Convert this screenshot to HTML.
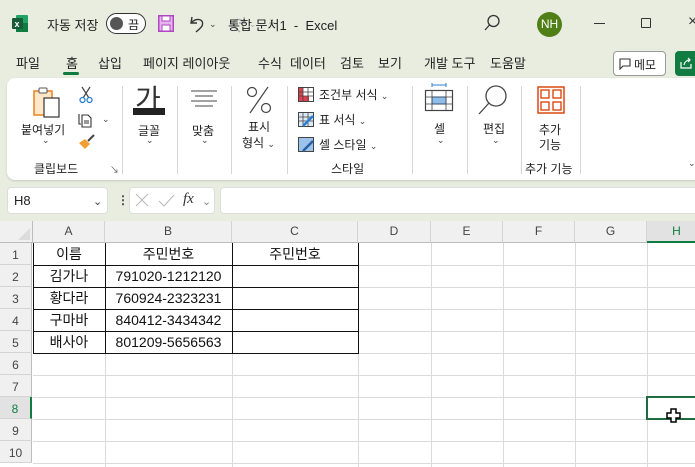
<!DOCTYPE html>
<html><head><meta charset="utf-8">
<style>
*{margin:0;padding:0;box-sizing:border-box}
body{width:695px;height:467px;overflow:hidden;background:#e9ede0;font-family:"Liberation Sans","Noto Sans CJK KR",sans-serif;color:#222;position:relative}
.a{position:absolute;white-space:nowrap}
.t13{font-size:13px}
.t12{font-size:12px}
.sep{position:absolute;top:86px;width:1px;height:88px;background:#d6d6d6}
.chev{font-size:9px;color:#444}
.hdr{position:absolute;top:221px;height:22px;background:#f0f0f0;border-bottom:1px solid #bdbdbd;font-size:12px;color:#444;text-align:center;line-height:20px;border-right:1px solid #d4d4d4}
.rh{position:absolute;left:0;width:32px;background:#f0f0f0;border-right:1px solid #bdbdbd;border-bottom:1px solid #d4d4d4;font-size:12px;color:#444;text-align:center;line-height:22px;height:22px;padding-top:1px}
.cell{position:absolute;font-size:14px;text-align:center;line-height:21px;color:#111;padding-top:1px}
</style></head><body>
<!-- title bar -->
<svg class="a" style="left:12px;top:15px" width="16" height="17"><rect x="4" y="0" width="12" height="17" rx="1" fill="#21a366"/><rect x="4" y="8" width="12" height="9" fill="#107c41"/><rect x="0" y="3" width="11" height="11" rx="1" fill="#185c37"/><text x="2.5" y="12" font-size="9" fill="#fff" font-family="Liberation Sans" font-weight="bold">x</text></svg>
<div class="a t13" style="left:47px;top:15px">자동 저장</div>
<div class="a" style="left:106px;top:13px;width:40px;height:21px;border:1.5px solid #333;border-radius:11px;background:#fff"></div>
<div class="a" style="left:110px;top:17px;width:13px;height:13px;border-radius:50%;background:#555"></div>
<div class="a t12" style="left:128px;top:16px">끔</div>
<svg class="a" style="left:158px;top:15px" width="16" height="17"><rect x="0.75" y="0.75" width="14.5" height="15.5" fill="#e4b5ec" stroke="#b146c2" stroke-width="1.5"/><rect x="4" y="1" width="8" height="5" fill="#fff" stroke="#b146c2"/><rect x="4" y="10" width="8" height="6" fill="#fff" stroke="#b146c2"/></svg>
<svg class="a" style="left:188px;top:14px" width="20" height="20"><path d="M4 3 L3 9 L9 9 M3 9 C8 3 17 5 14 12 C12 15 9 17 8 18" fill="none" stroke="#333" stroke-width="1.4"/></svg>
<div class="a chev" style="left:209px;top:19px">⌄</div>
<svg class="a" style="left:228px;top:14px" width="20" height="20"><path d="M16 3 L17 9 L11 9 M17 9 C12 3 3 5 6 12 C8 15 11 17 12 18" fill="none" stroke="#aaa" stroke-width="1.4"/></svg>
<div class="a chev" style="left:249px;top:19px;color:#aaa">⌄</div>
<div class="a" style="left:269px;top:17px;font-size:10px;color:#333">⩡</div>
<div class="a t13" style="left:228px;top:15px">통합 문서1 &nbsp;- &nbsp;Excel</div>
<svg class="a" style="left:483px;top:14px" width="18" height="18"><circle cx="10.5" cy="7" r="5.5" fill="none" stroke="#333" stroke-width="1.3"/><path d="M6.5 11 L2 16" stroke="#333" stroke-width="1.3"/></svg>
<div class="a" style="left:537px;top:12px;width:25px;height:25px;border-radius:50%;background:#4f7f16;color:#fff;font-size:12px;text-align:center;line-height:25px">NH</div>
<div class="a" style="left:594px;top:23px;width:11px;height:1px;background:#333"></div>
<div class="a" style="left:641px;top:18px;width:10px;height:10px;border:1.2px solid #333;border-radius:1px"></div>
<div class="a" style="left:688px;top:13px;font-size:16px;color:#333">×</div>
<!-- tabs -->
<div class="a t13" style="left:16px;top:53px">파일</div>
<div class="a t13" style="left:66px;top:53px">홈</div>
<div class="a" style="left:63px;top:72px;width:16px;height:3px;background:#107c41;border-radius:2px"></div>
<div class="a t13" style="left:98px;top:53px">삽입</div>
<div class="a t13" style="left:143px;top:53px">페이지 레이아웃</div>
<div class="a t13" style="left:258px;top:53px">수식</div>
<div class="a t13" style="left:290px;top:53px">데이터</div>
<div class="a t13" style="left:340px;top:53px">검토</div>
<div class="a t13" style="left:378px;top:53px">보기</div>
<div class="a t13" style="left:424px;top:53px">개발 도구</div>
<div class="a t13" style="left:490px;top:53px">도움말</div>
<div class="a" style="left:613px;top:51px;width:53px;height:25px;border:1px solid #999;border-radius:4px;background:#fff"></div>
<svg class="a" style="left:619px;top:58px" width="12" height="12"><path d="M1 1 H11 V8 H4 L1 11 Z" fill="none" stroke="#333" stroke-width="1.1"/></svg>
<div class="a t12" style="left:634px;top:56px">메모</div>
<div class="a" style="left:675px;top:51px;width:25px;height:25px;border-radius:4px;background:#107c41"></div>
<svg class="a" style="left:679px;top:56px" width="14" height="14"><path d="M2 6 V12 H12 V8 M5 9 C6 5 8 4 11 4 M9 2 L11 4 L9 6" fill="none" stroke="#fff" stroke-width="1.2"/></svg>
<!-- ribbon -->
<div class="a" style="left:7px;top:78px;width:700px;height:102px;background:#fff;border-radius:8px;box-shadow:0 1px 2px rgba(0,0,0,.15)"></div>
<svg class="a" style="left:33px;top:86px" width="30" height="32"><rect x="1" y="5" width="18" height="24" fill="#fde7c8" stroke="#e8821e" stroke-width="1.5"/><rect x="6" y="2" width="8" height="5" rx="1" fill="#fff" stroke="#555"/><rect x="11" y="12" width="15" height="19" fill="#fff" stroke="#333" stroke-width="1.2"/></svg>
<div class="a t12" style="left:21px;top:121px">붙여넣기</div>
<div class="a chev" style="left:42px;top:135px">⌄</div>
<svg class="a" style="left:79px;top:86px" width="14" height="18"><path d="M3 1 L10 12 M11 1 L4 12" stroke="#444" stroke-width="1.2"/><circle cx="3.5" cy="14" r="2.5" fill="none" stroke="#2a7fd4" stroke-width="1.3"/><circle cx="10.5" cy="14" r="2.5" fill="none" stroke="#2a7fd4" stroke-width="1.3"/></svg>
<svg class="a" style="left:78px;top:112px" width="16" height="16"><path d="M1 2 V12 H3 M4 3 H10 L13 6 V15 H4 Z" fill="none" stroke="#333" stroke-width="1.1"/><path d="M6 9 H11 M6 11 H11" stroke="#333"/></svg>
<div class="a chev" style="left:102px;top:114px">⌄</div>
<svg class="a" style="left:78px;top:134px" width="18" height="16"><path d="M1 9 L7 15 L12 10 L7 5 Z" fill="#f0a030"/><path d="M10 7 L16 1" stroke="#444" stroke-width="2"/></svg>
<div class="a t12" style="left:34px;top:160px">클립보드</div>
<div class="a" style="left:110px;top:163px;font-size:9px;color:#555">↘</div>
<div class="sep" style="left:122px"></div>
<div class="a" style="left:135px;top:78px;font-size:28px;color:#333">가</div>
<div class="a" style="left:133px;top:108px;width:32px;height:7px;background:#222"></div>
<div class="a t12" style="left:138px;top:122px">글꼴</div>
<div class="a chev" style="left:146px;top:135px">⌄</div>
<div class="sep" style="left:177px"></div>
<svg class="a" style="left:190px;top:90px" width="28" height="18"><path d="M1 1 H27 M5 6 H23 M1 11 H27 M5 16 H23" stroke="#444" stroke-width="1"/></svg>
<div class="a t12" style="left:192px;top:122px">맞춤</div>
<div class="a chev" style="left:201px;top:135px">⌄</div>
<div class="sep" style="left:231px"></div>
<svg class="a" style="left:246px;top:86px" width="26" height="28"><circle cx="6" cy="6" r="4.5" fill="none" stroke="#444" stroke-width="1.2"/><circle cx="20" cy="22" r="4.5" fill="none" stroke="#444" stroke-width="1.2"/><path d="M22 1 L4 27" stroke="#444" stroke-width="1.2"/></svg>
<div class="a t12" style="left:248px;top:118px">표시</div>
<div class="a t12" style="left:242px;top:134px">형식 <span class="chev">⌄</span></div>
<div class="sep" style="left:287px"></div>
<svg class="a" style="left:298px;top:87px" width="16" height="15"><rect x=".5" y=".5" width="15" height="14" fill="#fff" stroke="#444"/><rect x="1" y="1" width="4" height="13" fill="#e04050"/><rect x="5" y="9" width="6" height="5" fill="#e04050"/><path d="M5 1 V14 M10 1 V14 M1 5 H15 M1 9 H15" stroke="#444" stroke-width=".8"/></svg>
<div class="a t12" style="left:319px;top:86px">조건부 서식 <span class="chev">⌄</span></div>
<svg class="a" style="left:298px;top:112px" width="16" height="15"><rect x=".5" y=".5" width="15" height="14" fill="#dbe8f5" stroke="#444"/><path d="M5 1 V14 M10 1 V14 M1 5 H15 M1 9 H15" stroke="#444" stroke-width=".8"/><path d="M5 14 L15 4" stroke="#2a7fd4" stroke-width="2.5"/></svg>
<div class="a t12" style="left:319px;top:111px">표 서식 <span class="chev">⌄</span></div>
<svg class="a" style="left:298px;top:137px" width="16" height="15"><rect x=".5" y=".5" width="15" height="14" fill="#9cc3ea" stroke="#444"/><path d="M5 14 L15 4" stroke="#2a5fa4" stroke-width="2.5"/></svg>
<div class="a t12" style="left:319px;top:136px">셀 스타일 <span class="chev">⌄</span></div>
<div class="a t12" style="left:331px;top:160px">스타일</div>
<div class="sep" style="left:412px"></div>
<svg class="a" style="left:424px;top:82px" width="30" height="30"><path d="M8 3 H22 M8 1 V5 M22 1 V5" stroke="#2a7fd4"/><rect x="1.5" y="8.5" width="27" height="20" fill="#fff" stroke="#444" stroke-width="1.2"/><rect x="8" y="15" width="14" height="7" fill="#8fbce8" stroke="#1f6fc4"/><path d="M8 9 V28 M22 9 V28 M2 15 H28 M2 22 H28" stroke="#444" stroke-width=".8"/></svg>
<div class="a t12" style="left:434px;top:120px">셀</div>
<div class="a chev" style="left:437px;top:135px">⌄</div>
<div class="sep" style="left:467px"></div>
<svg class="a" style="left:478px;top:84px" width="32" height="32"><circle cx="18" cy="12" r="10" fill="none" stroke="#444" stroke-width="1.3"/><path d="M11 19 L1 30" stroke="#444" stroke-width="1.3"/></svg>
<div class="a t12" style="left:483px;top:120px">편집</div>
<div class="a chev" style="left:492px;top:135px">⌄</div>
<div class="sep" style="left:521px"></div>
<svg class="a" style="left:537px;top:86px" width="28" height="28"><rect x="1" y="1" width="26" height="26" fill="none" stroke="#d83b01" stroke-width="1.4"/><rect x="4" y="4" width="8" height="8" fill="none" stroke="#d83b01" stroke-width="1.3"/><rect x="16" y="4" width="8" height="8" fill="none" stroke="#d83b01" stroke-width="1.3"/><rect x="4" y="16" width="8" height="8" fill="none" stroke="#d83b01" stroke-width="1.3"/><rect x="16" y="16" width="8" height="8" fill="none" stroke="#d83b01" stroke-width="1.3"/></svg>
<div class="a t12" style="left:539px;top:121px">추가</div>
<div class="a t12" style="left:539px;top:136px">기능</div>
<div class="a t12" style="left:525px;top:160px">추가 기능</div>
<div class="sep" style="left:580px"></div>
<div class="a chev" style="left:688px;top:158px">⌄</div>
<!-- formula bar -->
<div class="a" style="left:7px;top:187px;width:101px;height:27px;background:#fff;border-radius:4px;border:1px solid #ddd"></div>
<div class="a t13" style="left:14px;top:193px">H8</div>
<div class="a chev" style="left:93px;top:195px;font-size:11px">⌄</div>
<div class="a" style="left:117px;top:193px;font-size:12px;font-weight:bold;color:#444">⋮</div>
<div class="a" style="left:129px;top:187px;width:86px;height:27px;background:#fff;border-radius:4px;border:1px solid #ddd"></div>
<svg class="a" style="left:135px;top:193px" width="48" height="16"><path d="M1 1 L13 13 M13 1 L1 13" stroke="#bbb" stroke-width="1.1"/><path d="M24 8 L29 13 L39 2" fill="none" stroke="#bbb" stroke-width="1.1"/></svg>
<div class="a" style="left:183px;top:191px;font-size:15px;font-style:italic;font-family:'Liberation Serif',serif;color:#333">fx</div>
<div class="a chev" style="left:202px;top:195px;font-size:11px;color:#888">⌄</div>
<div class="a" style="left:220px;top:187px;width:480px;height:27px;background:#fff;border-radius:4px;border:1px solid #ddd"></div>
<!-- grid -->
<div class="a" style="left:0;top:221px;width:695px;height:246px;background:#fff"></div>
<div class="hdr" style="left:0;width:33px;border-right:1px solid #bdbdbd"></div>
<svg class="a" style="left:18px;top:228px" width="12" height="12"><path d="M12 0 V12 H0 Z" fill="#dcdcdc"/></svg>
<div class="hdr" style="left:33px;width:72px">A</div>
<div class="hdr" style="left:105px;width:127px">B</div>
<div class="hdr" style="left:232px;width:126px">C</div>
<div class="hdr" style="left:358px;width:73px">D</div>
<div class="hdr" style="left:431px;width:72px">E</div>
<div class="hdr" style="left:503px;width:72px">F</div>
<div class="hdr" style="left:575px;width:72px">G</div>
<div class="hdr" style="left:647px;width:60px;background:#e2e2e2;border-bottom:2px solid #107c41;color:#107c41">H</div>
<svg class="a" style="left:33px;top:243px" width="662" height="224">
<g stroke="#dadada" stroke-width="1">
<path d="M72.5 0V224 M199.5 0V224 M325.5 0V224 M398.5 0V224 M470.5 0V224 M542.5 0V224 M614.5 0V224"/>
<path d="M0 22.5H662 M0 44.5H662 M0 66.5H662 M0 88.5H662 M0 110.5H662 M0 132.5H662 M0 154.5H662 M0 176.5H662 M0 198.5H662 M0 220.5H662"/>
</g>
<g stroke="#111" stroke-width="1">
<path d="M0.5 0V110 M72.5 0V110 M199.5 0V110 M325.5 0V110 M0 22.5H326 M0 44.5H326 M0 66.5H326 M0 88.5H326 M0 110.5H326"/>
</g>
<rect x="614" y="154" width="50" height="22" fill="none" stroke="#1d6b3e" stroke-width="2"/>
</svg>
<div class="rh" style="top:243px">1</div>
<div class="rh" style="top:265px">2</div>
<div class="rh" style="top:287px">3</div>
<div class="rh" style="top:309px">4</div>
<div class="rh" style="top:331px">5</div>
<div class="rh" style="top:353px">6</div>
<div class="rh" style="top:375px">7</div>
<div class="rh" style="top:397px;background:#e2e2e2;color:#107c41;border-right:2px solid #107c41">8</div>
<div class="rh" style="top:419px">9</div>
<div class="rh" style="top:441px">10</div>
<div class="cell" style="left:33px;width:72px;top:243px">이름</div>
<div class="cell" style="left:105px;width:127px;top:243px">주민번호</div>
<div class="cell" style="left:232px;width:126px;top:243px">주민번호</div>
<div class="cell" style="left:33px;width:72px;top:265px">김가나</div>
<div class="cell" style="left:105px;width:127px;top:265px">791020-1212120</div>
<div class="cell" style="left:33px;width:72px;top:287px">황다라</div>
<div class="cell" style="left:105px;width:127px;top:287px">760924-2323231</div>
<div class="cell" style="left:33px;width:72px;top:309px">구마바</div>
<div class="cell" style="left:105px;width:127px;top:309px">840412-3434342</div>
<div class="cell" style="left:33px;width:72px;top:331px">배사아</div>
<div class="cell" style="left:105px;width:127px;top:331px">801209-5656563</div>
<svg class="a" style="left:666px;top:408px" width="15" height="15"><path d="M5 1H10V5H14V10H10V14H5V10H1V5H5Z" fill="#fff" stroke="#000" stroke-width="1.5"/></svg>
</body></html>
